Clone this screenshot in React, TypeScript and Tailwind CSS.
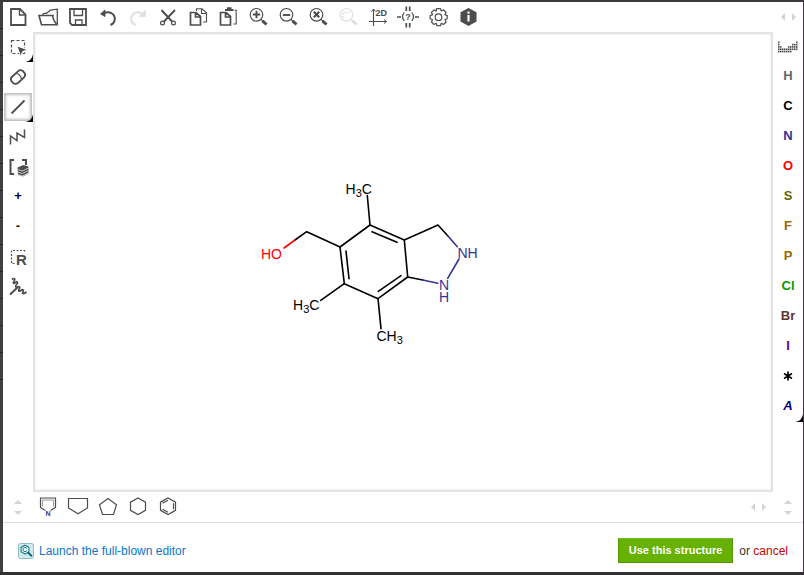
import type { ReactNode } from "react";

type Tool = {
  name: string;
  icon: ReactNode;
  muted?: boolean;
  active?: boolean;
  more?: boolean;
};

function Icon({ children }: { children: ReactNode }) {
  return (
    <svg
      viewBox="0 0 30 30"
      className="size-[30px]"
      fill="none"
      stroke="currentColor"
      strokeWidth="1.6"
      aria-hidden="true"
    >
      {children}
    </svg>
  );
}

function Glyph({ color, children }: { color: string; children: ReactNode }) {
  return <span className={"pb-0.5 " + color}>{children}</span>;
}

function ToolButton({ name, icon, muted, active, more }: Tool) {
  return (
    <button
      type="button"
      aria-label={name}
      disabled={muted}
      className={
        "relative flex size-[30px] shrink-0 items-center justify-center text-[13px] font-bold " +
        (muted ? "text-[#dedede]" : "text-[#4d4d4d]")
      }
    >
      {active && <span className="absolute inset-px border border-[#c4c4c4] shadow-[inset_0_0_3px_1px_#c0c0c0]" />}
      {icon}
      {more && <MoreCorner />}
    </button>
  );
}

/* Curled corner that marks a button with further choices */
function MoreCorner() {
  return (
    <svg viewBox="0 0 8 8" className="absolute right-0 bottom-0 size-2" aria-hidden="true">
      <path d="M8 0v8H0c4-.5 7-2.500 8-8z" fill="#000" />
    </svg>
  );
}

const topTools: Tool[] = [
  {
    name: "New",
    icon: (
      <Icon>
        <path d="M8 7h9l5.500 5.500V23H8z" strokeWidth="1.800" />
        <path d="M16.500 7.500V13H22" strokeWidth="1.400" />
      </Icon>
    ),
  },
  {
    name: "Open",
    icon: (
      <Icon>
        <path d="M9.500 12.800l1.500-1.500h2.500l4-3.300 6.800-.8V22" strokeWidth="1.300" />
        <path d="M6 13.500h14q-1 3 4 9.300H8.500z" strokeWidth="1.600" />
      </Icon>
    ),
  },
  {
    name: "Save",
    icon: (
      <Icon>
        <path d="M7 7h16v16H9l-2-2z" strokeWidth="1.800" />
        <path d="M11 7v6.500h8.500V7M12.500 23v-5h6.500v5" strokeWidth="1.300" />
      </Icon>
    ),
  },
  {
    name: "Undo",
    icon: (
      <Icon>
        <path d="M11 11.300c5-2.300 10.800 0 10.800 5.500 0 3-1.500 5-4.300 6.200" strokeWidth="2" />
        <path d="M7.500 12l4.500-4v6.500z" fill="currentColor" stroke="currentColor" strokeWidth=".8" />
      </Icon>
    ),
  },
  {
    name: "Redo",
    muted: true,
    icon: (
      <Icon>
        <path d="M19 11.300c-5-2.300-10.800 0-10.800 5.500 0 3 1.500 5 4.300 6.200" strokeWidth="2" />
        <path d="M22.500 8.500v6H16z" fill="currentColor" stroke="currentColor" strokeWidth=".8" />
      </Icon>
    ),
  },
  {
    name: "Cut",
    icon: (
      <Icon>
        <path d="M8.500 8l10.500 11.500M22 8L11 19.500" strokeWidth="1.900" />
        <circle cx="9.500" cy="21" r="1.900" strokeWidth="1.200" />
        <circle cx="20.500" cy="21" r="1.900" strokeWidth="1.200" />
      </Icon>
    ),
  },
  {
    name: "Copy",
    icon: (
      <Icon>
        <path d="M7.500 10.500h5.500l4.500 4V23h-10z M12.500 11v4H17" strokeWidth="1.700" />
        <path d="M13.500 9V6.800h5.500l4.500 4V20H20M18.500 7v4.500h4.500" strokeWidth="1.100" />
      </Icon>
    ),
  },
  {
    name: "Paste",
    icon: (
      <Icon>
        <path d="M7.500 10.500h5.500l4.500 4V23h-10z M12.500 11v4H17" strokeWidth="1.700" />
        <path d="M21.500 8.300h1.700V22H20.500" strokeWidth="1.100" />
        <path d="M12 8h8.500M14 6.200h4.500" strokeWidth="2" />
      </Icon>
    ),
  },
  { name: "Zoom in", icon: <Lens><path d="M9.800 12.500h7.400M13.500 8.800v7.400" strokeWidth="1.900" /></Lens> },
  { name: "Zoom out", icon: <Lens><path d="M9.800 13h7.400" strokeWidth="1.900" /></Lens> },
  { name: "Reset zoom", icon: <Lens><path d="M10.800 9.800l5.400 5.400M16.200 9.800l-5.400 5.400" strokeWidth="2.200" /></Lens> },
  {
    name: "Zoom to selection",
    muted: true,
    icon: <Lens><path d="M10 16v-5.500h7.500" strokeDasharray="2 1" strokeWidth="1.200" /></Lens>,
  },
  {
    name: "Clean 2D",
    icon: (
      <Icon>
        <path d="M10.500 24V7M6 19.500h17" strokeWidth="1.100" />
        <path d="M8.500 9.500l2-2.500 2 2.500M21 17.500l2.500 2-2.500 2" strokeWidth="1" />
        <text x="12.500" y="13.500" fontSize="9" fontWeight="bold" fill="currentColor" stroke="none">2D</text>
      </Icon>
    ),
  },
  {
    name: "Check structure",
    icon: (
      <Icon>
        <path d="M4 15h4M22 15h4M13.300 4.500v4.500M16.700 4.500v4.500M13.300 21v4.500M16.700 21v4.500" strokeWidth="1.700" />
        <path d="M11.200 10.500c-2 2.500-2 6 0 8.500M18.800 10.500c2 2.500 2 6 0 8.500" strokeWidth="1.200" />
        <text x="15" y="18" textAnchor="middle" fontSize="9" fontWeight="bold" fill="currentColor" stroke="none">?</text>
      </Icon>
    ),
  },
  {
    name: "Settings",
    icon: (
      <Icon>
        <path
          d="M13.500 6.700h4l.8 2.300 2.300-1.100 2.500 2.600-1.200 2.200 2.300.9v3.200l-2.300.9 1.200 2.300-2.600 2.500-2.200-1.200-.8 2.400h-3.500l-.8-2.400-2.300 1.200-2.500-2.600 1.200-2.200-2.500-.9v-3.200l2.500-.9-1.200-2.300 2.600-2.500 2.200 1.100z"
          strokeWidth="1.200"
          strokeLinejoin="round"
        />
        <circle cx="15.500" cy="15.200" r="3.300" strokeWidth="1.200" />
      </Icon>
    ),
  },
  {
    name: "About",
    icon: (
      <Icon>
        <path d="M15.500 6l8 4.300v9.200l-8 4.500-8-4.500v-9.200z" fill="currentColor" stroke="none" />
        <path d="M15.500 9.500v2.200M15.500 13v6.500" stroke="#fff" strokeWidth="2.200" />
      </Icon>
    ),
  },
];

function Lens({ children }: { children: ReactNode }) {
  return (
    <Icon>
      <circle cx="13.500" cy="12.800" r="6.300" strokeWidth="1.200" />
      <path d="M18 17.300l2 2" strokeWidth="1.200" />
      <path d="M19.500 18.800l4 3.700" strokeWidth="3" />
      {children}
    </Icon>
  );
}

const leftTools: Tool[] = [
  {
    name: "Select",
    more: true,
    icon: (
      <Icon>
        <path d="M8.500 8.500h13v13h-13z" strokeWidth="1.200" strokeDasharray="3 2" />
        <path d="M14 14l10.500 3.700-4.800 1.900-2 5z" fill="currentColor" stroke="#fff" strokeWidth="1" />
      </Icon>
    ),
  },
  {
    name: "Erase",
    icon: (
      <Icon>
        <path d="M15 9.300c1.500-1.300 3-1.500 4.500-.5l2 2c1 1.500 1 3-.5 4.500l-6 5.700c-1.500 1-3.500 1-5 0l-1.500-2c-1-1.500-1-3 .5-4.300z" strokeWidth="1.800" />
        <path d="M13 11.500c3 0 5.500 3 5.500 6" strokeWidth="1.200" />
      </Icon>
    ),
  },
  {
    name: "Single bond",
    active: true,
    more: true,
    icon: <Icon><path d="M8.500 21.500L21.500 8.500" strokeWidth="1.800" /></Icon>,
  },
  {
    name: "Chain",
    icon: <Icon><path d="M7.500 22.500v-8.500l6.500 4.500v-7.500l7.500 4.500V7.500" strokeWidth="1.500" /></Icon>,
  },
  {
    name: "Group",
    icon: (
      <Icon>
        <path d="M11 8H7.500v14H11M19 8h4v5" strokeWidth="2" />
        <path d="M14.500 15.500l6-2.500 5 1.500v7l-5.500 3-5-1.500z" fill="currentColor" stroke="none" />
        <path d="M14.500 17.500l5 1.500 6-3M14.500 20l5 1.500 6-3M14.500 22.500l5 1.500 6-3" stroke="#fff" strokeWidth=".7" />
      </Icon>
    ),
  },
  { name: "Increase charge", icon: <Glyph color="text-[#000044]">+</Glyph> },
  { name: "Decrease charge", icon: <Glyph color="text-[#331100]">-</Glyph> },
  {
    name: "R-group",
    icon: (
      <Icon>
        <path d="M21.500 9.500V8.500H8.500v13H13" strokeWidth="1.200" strokeDasharray="2 1.500" />
        <text x="13" y="22.500" fontSize="15" fontWeight="bold" fill="currentColor" stroke="none">R</text>
      </Icon>
    ),
  },
  {
    name: "Attachment point",
    icon: (
      <Icon>
        <path d="M7 22.500l8-7.500" strokeWidth="1.900" />
        <path d="M9 7.500c3-2 3.500 0 2 1.800s-.5 2.700 1.500 1.200 2.800.5 1 2.200-.5 3 1.200 2.300 3 0 1.500 2 0 2.700 2 1.200 2.800.5 1.500 2.200 1.500 1.700 3.800-.4" strokeWidth="1.700" />
      </Icon>
    ),
  },
];

const atoms = [
  { symbol: "H", color: "text-[#666666]" },
  { symbol: "C", color: "text-black" },
  { symbol: "N", color: "text-[#333399]" },
  { symbol: "O", color: "text-[#ff0000]" },
  { symbol: "S", color: "text-[#666600]" },
  { symbol: "F", color: "text-[#996600]" },
  { symbol: "P", color: "text-[#996600]" },
  { symbol: "Cl", color: "text-[#009900]" },
  { symbol: "Br", color: "text-[#663333]" },
  { symbol: "I", color: "text-[#660099]" },
];

const rings: Tool[] = [
  {
    name: "Pyrrole",
    icon: (
      <Icon>
        <path d="M12.500 18.500l-5-3V6h15v9.500l-5 3" strokeWidth="1.200" />
        <path d="M9.500 14.500v-6.500h11v6.500" stroke="#999" strokeWidth="1" />
        <text x="15" y="23.500" textAnchor="middle" fontSize="7" fontWeight="bold" fill="#333399" stroke="none">N</text>
      </Icon>
    ),
  },
  { name: "Cyclopentane, flat", icon: <Icon><path d="M5.500 6.500h19v9.500L15 21.700 5.500 16z" strokeWidth="1.200" /></Icon> },
  { name: "Cyclopentane", icon: <Icon><path d="M15 6.500l8.500 6.300-3 9.700h-11l-3-9.700z" strokeWidth="1.200" /></Icon> },
  { name: "Cyclohexane", icon: <Icon><path d="M15 6l7.500 4.200v8.100L15 22.500l-7.500-4.200v-8.100z" strokeWidth="1.200" /></Icon> },
  {
    name: "Benzene",
    icon: (
      <Icon>
        <path d="M15 6l7.500 4.200v8.100L15 22.500l-7.500-4.200v-8.100z" strokeWidth="1.200" />
        <path d="M9.500 11.300L15 8.200M20.500 11.300v6M9.500 17.200l5.500 3.100" strokeWidth="1.200" />
      </Icon>
    ),
  },
];

function ScrollPair({ vertical }: { vertical?: boolean }) {
  return (
    <div className={"flex size-[30px] shrink-0 items-center justify-center text-[#d4d4d4] " + (vertical ? "flex-col gap-[7px]" : "gap-[7px]")}>
      <button type="button" aria-label={vertical ? "Scroll up" : "Scroll left"}>
        {vertical ? (
          <svg viewBox="0 0 8 4" className="h-1 w-2" fill="currentColor"><path d="M4 0l4 4H0z" /></svg>
        ) : (
          <svg viewBox="0 0 4 8" className="h-2 w-1" fill="currentColor"><path d="M0 4l4-4v8z" /></svg>
        )}
      </button>
      <button type="button" aria-label={vertical ? "Scroll down" : "Scroll right"}>
        {vertical ? (
          <svg viewBox="0 0 8 4" className="h-1 w-2" fill="currentColor"><path d="M4 4L0 0h8z" /></svg>
        ) : (
          <svg viewBox="0 0 4 8" className="h-2 w-1" fill="currentColor"><path d="M4 4L0 0v8z" /></svg>
        )}
      </button>
    </div>
  );
}

/* Filled cells of the periodic table glyph, row by row */
const periodicRows = ["1000000001", "1000000111", "1100011111", "1111111111", "1111111000"];

function PeriodicTableIcon() {
  return (
    <svg viewBox="0 0 20 12" className="h-3 w-5" fill="#4d4d4d" aria-hidden="true">
      {periodicRows.map((row, y) =>
        row.split("").map((cell, x) =>
          cell === "1" ? <rect key={`${x}-${y}`} x={x * 2} y={y * 2.3 + 0.5} width="1.5" height="1.7" /> : null,
        ),
      )}
    </svg>
  );
}

function Molecule() {
  return (
    <svg
      viewBox="35 34 736 456"
      className="size-full"
      fill="none"
      stroke="#000"
      strokeWidth="1.600"
      strokeLinecap="round"
      strokeLinejoin="round"
      role="img"
      aria-label="Molecule"
    >
      <path d="M370 225l34.300 15 3.400 37-29.700 21.700-33.700-15-4.300-36.700z" />
      <path d="M372 231.700l25 10.600M401 275.700l-22.700 15.600M346 251l3 27.700" />
      <path d="M367.300 195.500l2.700 29.500M344.300 283.700l-23.600 16.600M378 298.700l3 30M340 247l-33.300-15.300-11.700 8.300" />
      <path d="M404.300 240l33.700-15 9.700 10.800M407.700 277l15 3" />
      <path d="M447.700 235.800l9.600 10.900M422.700 280l15 3.300M459 259l-11.300 19.300" stroke="#333399" />
      <path d="M295 240l-11 8" stroke="#ff0000" />
      <g fill="#000" stroke="none" fontSize="14">
        <text x="345.500" y="194">H<tspan fontSize="11" dy="3">3</tspan><tspan dy="-3">C</tspan></text>
        <text x="293" y="310">H<tspan fontSize="11" dy="3">3</tspan><tspan dy="-3">C</tspan></text>
        <text x="376.500" y="341">CH<tspan fontSize="11" dy="3">3</tspan></text>
        <text x="261" y="259" fill="#ff0000">HO</text>
        <text x="457.500" y="258" fill="#333399">NH</text>
        <text x="439" y="290" fill="#333399">N</text>
        <text x="439" y="302" fill="#333399">H</text>
      </g>
    </svg>
  );
}

function LaunchIcon() {
  return (
    <svg viewBox="0 0 16 16" className="size-4" fill="none" aria-hidden="true">
      <rect x=".5" y=".5" width="15" height="15" rx="2" fill="#d3e8ec" stroke="#8dbcc5" />
      <path d="M7 2.200l3.900 2.200v4.400L7 11 3.100 8.800V4.400z" fill="#fff" stroke="#14808f" strokeWidth="1.100" />
      <path d="M9 5.500L7 4.400 5 5.500v2.200l2 1.100 2-1.100" stroke="#14808f" strokeWidth="1" />
      <path d="M9.800 9.300l4 3.900" stroke="#086878" strokeWidth="2" />
    </svg>
  );
}

const backdropRows = Array.from({ length: 14 }, (_, i) => i);

export default function App() {
  return (
    <div className="flex h-screen flex-col overflow-hidden bg-[#3b393b] pt-0.5 font-['Liberation_Sans',Arial,sans-serif] text-xs">
      <div className="flex min-h-0 flex-1 pr-px">
        <div className="w-[3px] shrink-0 overflow-hidden bg-[#403f42]">
          {backdropRows.map((row) => (
            <div key={row} className="h-[27px] border-b border-[#202c0c]" />
          ))}
        </div>

        <main className="flex min-w-0 flex-1 flex-col bg-white">
          <div className="flex shrink-0 justify-between">
            <div className="flex">
              {topTools.map((tool) => (
                <ToolButton key={tool.name} {...tool} />
              ))}
            </div>
            <ScrollPair />
          </div>

          <div className="flex min-h-0 flex-1">
            <div className="flex w-[30px] shrink-0 flex-col">
              {leftTools.map((tool) => (
                <ToolButton key={tool.name} {...tool} />
              ))}
            </div>
            <div className="min-w-0 flex-1 border-2 border-[#e4e4e4] shadow-[inset_0_0_2px_#dddddd]">
              <Molecule />
            </div>
            <div className="flex w-[30px] shrink-0 flex-col">
              <ToolButton name="Periodic table" icon={<PeriodicTableIcon />} />
              {atoms.map((atom) => (
                <ToolButton
                  key={atom.symbol}
                  name={atom.symbol}
                  icon={<Glyph color={atom.color}>{atom.symbol}</Glyph>}
                />
              ))}
              <ToolButton
                name="Any atom"
                icon={
                  <Icon>
                    <path d="M15 9.500v9M11 11.500l8 5M19 11.500l-8 5" stroke="#000" strokeWidth="1.700" />
                  </Icon>
                }
              />
              <ToolButton name="Atom list" more icon={<Glyph color="text-[#000080] italic">A</Glyph>} />
            </div>
          </div>

          <div className="flex shrink-0 border-b border-[#dddddd]">
            <ScrollPair vertical />
            <div className="flex flex-1">
              {rings.map((ring) => (
                <ToolButton key={ring.name} {...ring} />
              ))}
            </div>
            <ScrollPair />
            <ScrollPair vertical />
          </div>

          <footer className="flex shrink-0 items-center justify-between pt-[15px] pr-[15px] pb-[9px] pl-[15px]">
            <a href="#editor" className="flex items-center gap-[5px] text-[#0b76cc]">
              <LaunchIcon />
              Launch the full-blown editor
            </a>
            <div className="flex items-center gap-1.5 text-[#333333]">
              <button
                type="button"
                className="h-[25px] border border-[#4f9a00] border-t-[#6fb92b] bg-[#67b200] px-2.5 text-[11px] font-bold text-white"
              >
                Use this structure
              </button>
              <span>
                or <a href="#cancel" className="text-[#cc0000]">cancel</a>
              </span>
            </div>
          </footer>
        </main>
      </div>
      <div className="flex h-[3px] shrink-0 justify-between overflow-hidden bg-[#333133] pr-px pl-[278px] text-[11px] leading-[14px] font-bold text-[#0c0c10]">
        <span>Chemical Properties</span>
        <span>Batch Ele</span>
      </div>
    </div>
  );
}
